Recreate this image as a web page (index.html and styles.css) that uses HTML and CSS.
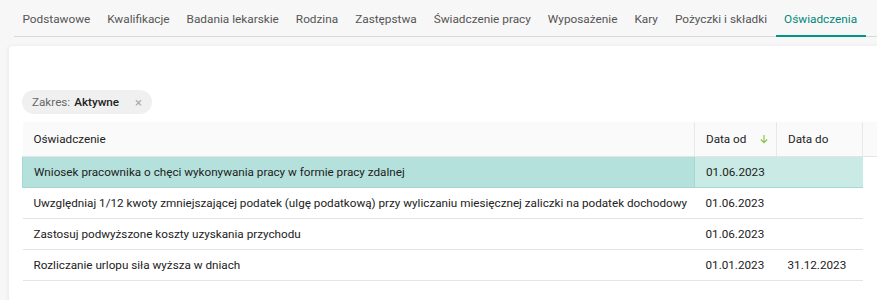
FILE: index.html
```html
<!DOCTYPE html>
<html lang="pl">
<head>
<meta charset="utf-8">
<title>Oświadczenia</title>
<link rel="stylesheet" href="styles.css">
</head>
<body>
<nav class="tabs">
  <a class="tab">Podstawowe</a>
  <a class="tab">Kwalifikacje</a>
  <a class="tab">Badania lekarskie</a>
  <a class="tab">Rodzina</a>
  <a class="tab">Zastępstwa</a>
  <a class="tab">Świadczenie pracy</a>
  <a class="tab">Wyposażenie</a>
  <a class="tab">Kary</a>
  <a class="tab">Pożyczki i składki</a>
  <a class="tab active">Oświadczenia</a>
</nav>
<main class="card">
  <div class="chip"><span class="chip-label">Zakres:</span> <span class="chip-value">Aktywne</span><span class="chip-x">×</span></div>
  <table class="grid">
    <colgroup>
      <col class="c1"><col class="c2"><col class="c3"><col class="c4">
    </colgroup>
    <thead>
      <tr>
        <th>Oświadczenie</th>
        <th class="sorted"><span class="sort">Data od <svg class="arrow" width="10" height="10" viewBox="0 0 10 10"><path d="M5 1 V8.5 M1.8 5.5 L5 8.6 L8.2 5.5" fill="none" stroke="#8bc34a" stroke-width="1.2"/></svg></span></th>
        <th>Data do</th>
        <th class="filler"></th>
      </tr>
    </thead>
    <tbody>
      <tr class="selected">
        <td>Wniosek pracownika o chęci wykonywania pracy w formie pracy zdalnej</td>
        <td>01.06.2023</td>
        <td></td>
        <td class="filler"></td>
      </tr>
      <tr>
        <td>Uwzględniaj 1/12 kwoty zmniejszającej podatek (ulgę podatkową) przy wyliczaniu miesięcznej zaliczki na podatek dochodowy</td>
        <td>01.06.2023</td>
        <td></td>
        <td class="filler"></td>
      </tr>
      <tr>
        <td>Zastosuj podwyższone koszty uzyskania przychodu</td>
        <td>01.06.2023</td>
        <td></td>
        <td class="filler"></td>
      </tr>
      <tr>
        <td>Rozliczanie urlopu siła wyższa w dniach</td>
        <td>01.01.2023</td>
        <td>31.12.2023</td>
        <td class="filler"></td>
      </tr>
    </tbody>
  </table>
</main>
</body>
</html>
```

FILE: styles.css
```css
html, body {
  margin: 0;
  padding: 0;
  background: #f7f7f7;
  font-family: Roboto, "Liberation Sans", sans-serif;
  overflow: hidden;
  height: 300px;
}

.tabs {
  display: flex;
  margin-left: 14px;
  height: 36px;
  border-bottom: 1px solid #d9d9d9;
}

.tab {
  display: block;
  padding: 12px 8.5px 8px;
  line-height: 15px;
  font-size: 11.8px;
  color: #555555;
  border-bottom: 2px solid transparent;
  margin-bottom: -1px;
  white-space: nowrap;
}

.tab.active {
  color: #00897b;
  border-bottom-color: #009688;
}

.card {
  margin: 9px 0 0 9px;
  background: #ffffff;
  border-radius: 4px 0 0 0;
  box-shadow: -1px 0 4px rgba(0, 0, 0, 0.06);
  padding: 44px 0 20px 13px;
  width: 900px;
  height: 200px;
}

.chip {
  display: inline-flex;
  align-items: center;
  height: 24px;
  padding: 0 10px;
  border-radius: 12px;
  background: #f0f0f0;
  font-size: 11.7px;
  color: #666666;
}

.chip-label {
  margin-right: 4px;
}

.chip-value {
  color: #222222;
  font-weight: 500;
}

.chip-x {
  margin-left: 16px;
  color: #aaaaaa;
  font-size: 13px;
}

.grid {
  margin-top: 8px;
  border-collapse: collapse;
  table-layout: fixed;
  width: 887px;
  font-size: 11.7px;
  color: #222222;
}

.c1 { width: 672px; }
.c2 { width: 82px; }
.c3 { width: 86px; }
.c4 { width: 47px; }

th {
  height: 34px;
  background: #fafafa;
  text-align: left;
  font-weight: 400;
  padding: 0 11px;
  border-right: 1px solid #e8e8e8;
  border-bottom: 1px solid #e4e4e4;
}

th.sorted {
  padding-right: 7px;
}

.sort {
  display: flex;
  justify-content: space-between;
  align-items: center;
}

.arrow {
  display: block;
}

td {
  height: 30px;
  padding: 0 11px;
  border-bottom: 1px solid #e4e4e4;
  white-space: nowrap;
}

td.filler {
  border-bottom: none;
  background: #ffffff;
}

tr.selected td {
  background: #c9eae5;
  border-top: 1px solid #a3d9d2;
  border-bottom: 1px solid #a3d9d2;
}

tr.selected td:first-child {
  background: #b4e1dc;
  border-left: 1px solid #a3d9d2;
  border-right: 1px solid #a3d9d2;
}

tr.selected td.filler {
  background: #ffffff;
  border: none;
}
```
